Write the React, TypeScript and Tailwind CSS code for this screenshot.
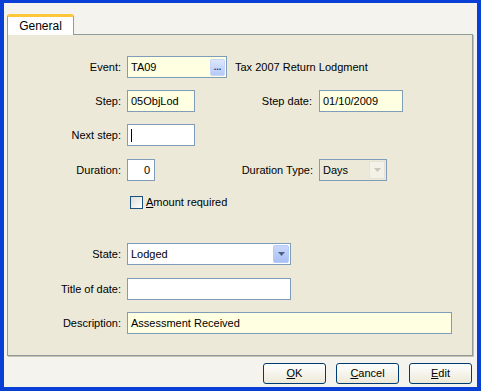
import React from "react";

function Field({
  width,
  value,
  yellow,
  align,
  children,
}: {
  width: string;
  value?: string;
  yellow?: boolean;
  align?: "right";
  children?: React.ReactNode;
}) {
  return (
    <div
      className={`${width} h-[22px] border border-[#7f9db9] flex items-center relative ${
        yellow ? "bg-[#ffffe1]" : "bg-white"
      }`}
    >
      <span
        className={`flex-1 px-[3px] whitespace-nowrap ${
          align === "right" ? "text-right pr-[4px]" : ""
        }`}
      >
        {value}
      </span>
      {children}
    </div>
  );
}

function XpButton({ first, rest }: { first: string; rest: string }) {
  return (
    <button className="w-[63px] h-[21px] rounded-[3px] border border-[#003c74] bg-gradient-to-b from-white to-[#ece9d8] text-black flex items-center justify-center">
      <span>
        <span className="underline">{first}</span>
        {rest}
      </span>
    </button>
  );
}

export default function App() {
  return (
    <div
      className="w-[481px] h-[391px] bg-[#0842dc] border-l-[4px] border-r-[4px] border-t-[3px] border-b-[4px] border-[#0a3fd6] text-[11px] text-black"
      style={{ fontFamily: '"Liberation Sans", Arial, sans-serif' }}
    >
      <div className="w-full h-full bg-[#f4f3ee] pt-[11px] pl-[3px] pr-[4px] flex flex-col">
        {/* tab strip */}
        <div className="flex h-[20px] relative z-10">
          <div className="w-[67px] h-[21px] bg-white border-l border-r border-[#919b9c] rounded-t-[3px] border-t-[3px] border-t-[#ffc83c] flex items-center justify-center text-[12px]">
            General
          </div>
        </div>

        {/* panel */}
        <div className="h-[322px] bg-[#ece9d8] border border-[#919b9c] shadow-[1px_1px_0_#c5c2b2] flex flex-col">
          {/* Event */}
          <div className="flex items-center h-[22px] mt-[21px]">
            <span className="w-[113px] text-right">Event:</span>
            <div className="ml-[6px]">
              <Field width="w-[100px]" value="TA09" yellow>
                <div className="w-[15px] h-[17px] mr-[1px] rounded-[2px] bg-gradient-to-b from-[#dce7fd] to-[#b5c9f7] border border-[#c6d5f9] flex items-end justify-center pb-[3px] text-[#1a2a6a] text-[9px] font-bold leading-none">
                  ...
                </div>
              </Field>
            </div>
            <span className="ml-[8px]">Tax 2007 Return Lodgment</span>
          </div>

          {/* Step */}
          <div className="flex items-center h-[22px] mt-[12px]">
            <span className="w-[113px] text-right">Step:</span>
            <div className="ml-[6px]">
              <Field width="w-[68px]" value="05ObjLod" yellow />
            </div>
            <span className="w-[117px] text-right">Step date:</span>
            <div className="ml-[7px]">
              <Field width="w-[84px]" value="01/10/2009" yellow />
            </div>
          </div>

          {/* Next step */}
          <div className="flex items-center h-[22px] mt-[12px]">
            <span className="w-[113px] text-right">Next step:</span>
            <div className="ml-[6px]">
              <div className="w-[68px] h-[22px] border border-[#7f9db9] bg-white flex items-center pl-[3px]">
                <div className="w-[1px] h-[13px] bg-black" />
              </div>
            </div>
          </div>

          {/* Duration */}
          <div className="flex items-center h-[22px] mt-[13px]">
            <span className="w-[113px] text-right">Duration:</span>
            <div className="ml-[6px]">
              <Field width="w-[28px]" value="0" align="right" />
            </div>
            <span className="w-[158px] text-right">Duration Type:</span>
            <div className="ml-[6px] w-[68px] h-[22px] border border-[#7f9db9] bg-[#ece9d8] flex items-center">
              <span className="flex-1 pl-[3px]">Days</span>
              <div className="w-[16px] h-[18px] mr-[1px] bg-[#f3f1e8] border border-[#e6e3d6] flex items-center justify-center">
                <svg width="7" height="4" viewBox="0 0 7 4">
                  <path d="M0 0h7L3.5 4z" fill="#c9c7ba" />
                </svg>
              </div>
            </div>
          </div>

          {/* Amount required */}
          <div className="flex items-center h-[13px] mt-[15px]">
            <div className="ml-[122px] w-[13px] h-[13px] border border-[#1c5180] bg-gradient-to-br from-[#dcdcd7] to-white" />
            <span className="ml-[3px]">
              <span className="underline">A</span>mount required
            </span>
          </div>

          {/* State */}
          <div className="flex items-center h-[22px] mt-[34px]">
            <span className="w-[113px] text-right">State:</span>
            <div className="ml-[6px] w-[164px] h-[22px] border border-[#7f9db9] bg-white flex items-center">
              <span className="flex-1 pl-[3px]">Lodged</span>
              <div className="w-[16px] h-[18px] mr-[1px] rounded-[2px] bg-gradient-to-b from-[#c9d8fc] to-[#a9c0f3] border border-[#b8cbf6] flex items-center justify-center">
                <svg width="7" height="4" viewBox="0 0 7 4">
                  <path d="M0 0h7L3.5 4z" fill="#4d6185" />
                </svg>
              </div>
            </div>
          </div>

          {/* Title of date */}
          <div className="flex items-center h-[22px] mt-[13px]">
            <span className="w-[113px] text-right">Title of date:</span>
            <div className="ml-[6px]">
              <Field width="w-[164px]" />
            </div>
          </div>

          {/* Description */}
          <div className="flex items-center h-[22px] mt-[12px]">
            <span className="w-[113px] text-right">Description:</span>
            <div className="ml-[6px]">
              <Field width="w-[325px]" value="Assessment Received" yellow />
            </div>
          </div>
        </div>

        {/* buttons */}
        <div className="flex justify-end gap-[10px] mt-[7px] pr-[1px]">
          <XpButton first="O" rest="K" />
          <XpButton first="C" rest="ancel" />
          <XpButton first="E" rest="dit" />
        </div>
      </div>
    </div>
  );
}
